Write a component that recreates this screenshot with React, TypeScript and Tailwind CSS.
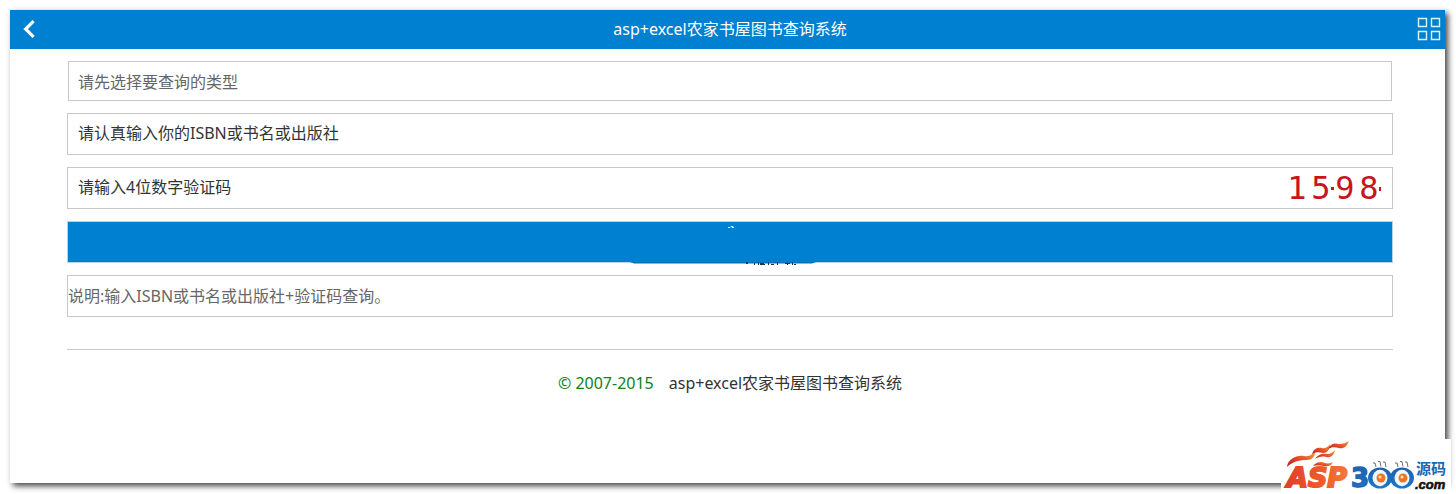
import { useState } from 'react';

const CODE = ['1', '5', '9', '8'];

const field = 'block w-full h-[42px] border border-[#c8c8c8] bg-white px-2.5 pb-1 text-base rounded-none outline-none';

function BackIcon() {
  return (
    <svg width="12" height="18" viewBox="0 0 12 18" fill="none" stroke="#fff" strokeWidth="3.2">
      <path d="M10.6 1.2 2.6 9l8 7.800" />
    </svg>
  );
}

function GridIcon() {
  return (
    <svg width="24" height="24" viewBox="0 0 24 24" fill="none" stroke="#d9f3ff" strokeWidth="1.4">
      <path d="M1.5 1.5h8v8h-8zM14.5 1.5h8v8h-8zM1.5 14.5h8v8h-8zM14.5 14.5h8v8h-8z" />
    </svg>
  );
}

function SiteLogo() {
  return (
    <svg width="170" height="55" viewBox="0 0 170 55" role="img" aria-label="ASP300源码.com">
      <defs>
        <linearGradient id="fire" x1="0" y1="1" x2="1" y2="0">
          <stop offset="0" stopColor="#b81c1c" />
          <stop offset="0.5" stopColor="#e9502a" />
          <stop offset="1" stopColor="#f9a13a" />
        </linearGradient>
        <linearGradient id="letters" x1="0" y1="0" x2="1" y2="0">
          <stop offset="0" stopColor="#e0402a" />
          <stop offset="0.6" stopColor="#ee5c28" />
          <stop offset="1" stopColor="#f27a3a" />
        </linearGradient>
        <linearGradient id="digits" x1="0" y1="0" x2="0" y2="1">
          <stop offset="0" stopColor="#1f5fae" />
          <stop offset="1" stopColor="#1c78cc" />
        </linearGradient>
      </defs>
      <g fill="url(#fire)">
        <path d="M6 28c1-8 9-12 17-11 6 1 9-2 11-6 1 6-3 10-8 10-7 0-14 1-20 7z" />
        <path d="M31 15c2-6 6-7 10-6 3 1 6-1 8-4 0 6-3 9-7 9-4-1-8-1-11 1z" />
        <path d="M34 20c3-5 8-6 12-5 4 0 6-2 8-4-1 6-5 8-9 7-4-1-8 0-11 2z" />
        <path d="M47 10c3-6 7-6 11-5 4 0 7-1 10-3-2 6-6 8-10 7-4-1-8-1-11 1z" />
        <path d="M32 27c3-4 8-5 12-3 3 1 6 0 8-1-2 4-5 5-9 4-4-1-8-1-11 0z" />
      </g>
      <text x="6" y="48" fontFamily="DejaVu Sans" fontSize="27" fontWeight="700" fontStyle="italic" fill="url(#letters)" stroke="url(#letters)" strokeWidth="2">
        ASP
      </text>
      <text x="70" y="48" fontFamily="DejaVu Sans" fontSize="26" fontWeight="700" fill="url(#digits)" stroke="#1b66b5" strokeWidth="1.4">
        3
      </text>
      {[99, 121].map((x) => (
        <g key={x}>
          <ellipse cx={x} cy="39" rx="12" ry="10.5" fill="url(#digits)" />
          <ellipse cx={x} cy="39" rx="7.5" ry="8.200" fill="#eef6ff" />
          <circle cx={x + 1} cy="39" r="4.500" fill="#ee7622" />
          <circle cx={x} cy="38" r="1.500" fill="#ffe3b8" />
          <path d={`M${x - 4} 28l-1-4h-2M${x + 1} 27.500l-1-5h-2M${x + 6} 28l-1-5h-2`} fill="none" stroke="#57606b" strokeWidth="0.9" />
        </g>
      ))}
      <text x="135" y="35" fontFamily="Noto Sans CJK SC" fontSize="15" fontWeight="700" fill="#1767b3">
        源码
      </text>
      <text x="134" y="50" fontFamily="Liberation Sans" fontSize="13" fontWeight="700" fontStyle="italic" fill="#111" stroke="#111" strokeWidth="0.6">
        .com
      </text>
    </svg>
  );
}

export default function App() {
  const [type, setType] = useState('');
  const [keyword, setKeyword] = useState('请认真输入你的ISBN或书名或出版社');
  const [code, setCode] = useState('请输入4位数字验证码');

  return (
    <div className="relative flex min-h-screen flex-col overflow-hidden bg-white pt-2.5 pl-2.5 pr-[11px] pb-[11px] font-['Noto_Sans','Noto_Sans_CJK_SC',sans-serif] text-base text-[#333]">
      <div className="flex-1 bg-white shadow-[3px_3px_6px_#444]">
        <header className="flex h-[39px] items-center bg-[#0080d0] pb-0.5 text-white">
          <button type="button" aria-label="返回" className="flex h-full w-[35px] items-center pl-[13px]">
            <BackIcon />
          </button>
          <h1 className="flex-1 text-center text-base">asp+excel农家书屋图书查询系统</h1>
          <button type="button" aria-label="菜单" className="flex h-full w-[30px] items-center pl-0.5">
            <GridIcon />
          </button>
        </header>

        <main className="pt-3 pl-[57px] pr-[52px]">
          <form className="space-y-3" onSubmit={(e) => e.preventDefault()}>
            <div className="px-px">
              <select
                aria-label="查询类型"
                value={type}
                onChange={(e) => setType(e.target.value)}
                className="block h-10 w-full appearance-none rounded-none border border-[#c8c8c8] bg-white px-[9px] pt-0.5 text-base text-[#666] outline-none"
              >
                <option value="">请先选择要查询的类型</option>
              </select>
            </div>
            <input aria-label="查询内容" value={keyword} onChange={(e) => setKeyword(e.target.value)} className={field} />
            <div className="relative">
              <input aria-label="验证码" value={code} onChange={(e) => setCode(e.target.value)} className={field} />
              <div className="absolute inset-y-0 right-3 flex items-center font-['DejaVu_Sans_Mono',monospace] text-[32px] leading-none text-[#c8141c]">
                {CODE.map((n) => (
                  <span key={n} className="w-6 text-center">
                    {n}
                  </span>
                ))}
                <i className="absolute top-5 left-[46px] size-[3px] bg-[#c8141c]" />
                <i className="absolute top-5 right-0 h-1 w-[2px] bg-[#c8141c]" />
              </div>
            </div>
            <button type="submit" aria-label="查询" className="relative block h-[42px] w-full border border-[#b4d4ea] bg-[#0080d0]">
              <svg className="absolute top-0 left-1/2 -translate-x-1/2" width="200" height="46" viewBox="0 0 200 46">
                <path d="M98 5.500h2l1-1h2l-1 1h2" fill="none" stroke="#d4f4ff" />
                <path d="M0 40h186l-4 1.500H4z" fill="#0873b8" />
                <path d="M116 40h2v2h-2zM124 41h1v2h-1zM128 40h1v3h-1zM130 41h4v1h-4zM130 42h5v1h-5zM138 40h1v3h-1zM141 42h3v1h-3zM147 40h1v3h-1zM155 41h5v1h-5zM157 42h1v1h-1zM162 40h1v3h-1zM164 42h2v1h-2z" fill="#17384c" />
              </svg>
            </button>
            <p className="flex h-[42px] items-center border border-[#c8c8c8] text-[#666]">
              说明:输入ISBN或书名或出版社+验证码查询。
            </p>
          </form>

          <footer className="mt-8 flex justify-center gap-[15px] border-t border-[#c8c8c8] pt-[21px]">
            <span className="text-[#158015]">© 2007-2015</span>
            <span>asp+excel农家书屋图书查询系统</span>
          </footer>
        </main>
      </div>

      <div className="absolute right-[5px] bottom-0 bg-white">
        <SiteLogo />
      </div>
    </div>
  );
}
